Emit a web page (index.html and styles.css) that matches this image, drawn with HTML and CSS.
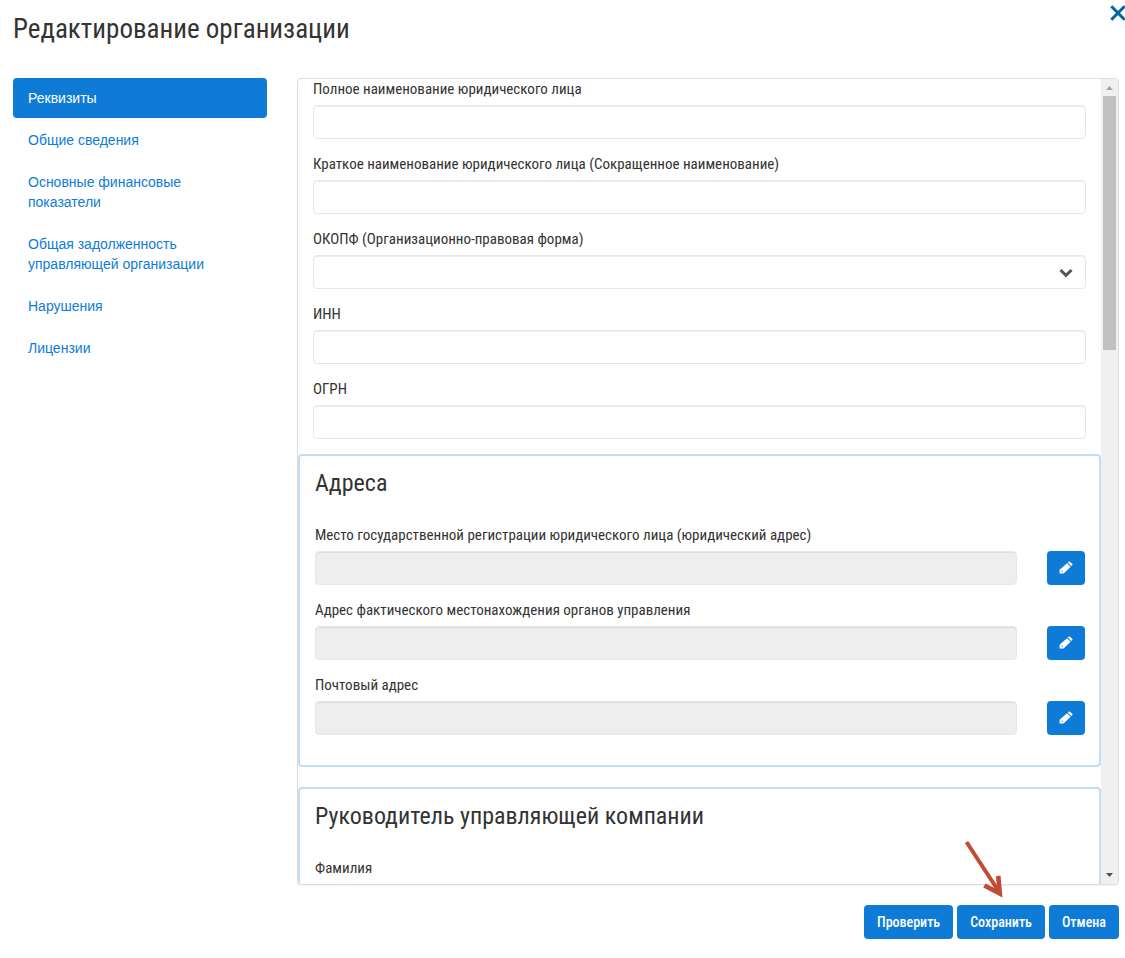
FILE: index.html
```html
<!DOCTYPE html>
<html lang="ru">
<head>
<meta charset="utf-8">
<title>Редактирование организации</title>
<meta name="viewport" content="width=device-width, initial-scale=1">
<link rel="stylesheet" href="styles.css">
</head>
<body>
<main class="dialog">
  <button class="close" type="button" aria-label="Закрыть">
    <svg viewBox="0 0 16 16" width="16" height="16" aria-hidden="true"><path d="M1.3 1.2 14.7 14.8M14.7 1.2 1.3 14.8"/></svg>
  </button>
  <h1 class="title">Редактирование организации</h1>

  <div class="columns">
    <nav class="tabs" aria-label="Разделы">
      <a class="tab tab-active" href="#details" aria-current="page">Реквизиты</a>
      <a class="tab" href="#general">Общие сведения</a>
      <a class="tab" href="#finance">Основные финансовые показатели</a>
      <a class="tab" href="#debt">Общая задолженность управляющей организации</a>
      <a class="tab" href="#violations">Нарушения</a>
      <a class="tab" href="#licenses">Лицензии</a>
    </nav>

    <div class="panel">
      <form class="form" id="details">
        <div class="fields">
          <div class="field">
            <label for="full-name">Полное наименование юридического лица</label>
            <input class="control" id="full-name" type="text">
          </div>
          <div class="field">
            <label for="short-name">Краткое наименование юридического лица (Сокращенное наименование)</label>
            <input class="control" id="short-name" type="text">
          </div>
          <div class="field">
            <label for="okopf">ОКОПФ (Организационно-правовая форма)</label>
            <div class="select">
              <select class="control" id="okopf"><option value=""></option></select>
              <svg class="chevron" viewBox="0 0 14 10" width="14" height="10" aria-hidden="true"><path d="M1.500 2 7 7.300 12.500 2"/></svg>
            </div>
          </div>
          <div class="field">
            <label for="inn">ИНН</label>
            <input class="control" id="inn" type="text">
          </div>
          <div class="field">
            <label for="ogrn">ОГРН</label>
            <input class="control" id="ogrn" type="text">
          </div>
        </div>

        <section class="group">
          <h2 class="group-title">Адреса</h2>
          <div class="field">
            <label for="legal">Место государственной регистрации юридического лица (юридический адрес)</label>
            <div class="row">
              <input class="control" id="legal" type="text" disabled>
              <button class="btn btn-icon" type="button" aria-label="Изменить юридический адрес"><svg viewBox="0 0 14 14" width="14" height="14" aria-hidden="true"><use href="#pencil"/></svg></button>
            </div>
          </div>
          <div class="field">
            <label for="actual">Адрес фактического местонахождения органов управления</label>
            <div class="row">
              <input class="control" id="actual" type="text" disabled>
              <button class="btn btn-icon" type="button" aria-label="Изменить фактический адрес"><svg viewBox="0 0 14 14" width="14" height="14" aria-hidden="true"><use href="#pencil"/></svg></button>
            </div>
          </div>
          <div class="field">
            <label for="postal">Почтовый адрес</label>
            <div class="row">
              <input class="control" id="postal" type="text" disabled>
              <button class="btn btn-icon" type="button" aria-label="Изменить почтовый адрес"><svg viewBox="0 0 14 14" width="14" height="14" aria-hidden="true"><use href="#pencil"/></svg></button>
            </div>
          </div>
        </section>

        <section class="group">
          <h2 class="group-title">Руководитель управляющей компании</h2>
          <div class="field">
            <label for="surname">Фамилия</label>
            <input class="control" id="surname" type="text">
          </div>
        </section>
      </form>
      <div class="scrollbar" aria-hidden="true">
        <svg class="scroll-arrow scroll-up" viewBox="0 0 17 17"><path d="M5 11h7L8.500 7z"/></svg>
        <div class="scroll-track"><div class="scroll-thumb"></div></div>
        <svg class="scroll-arrow scroll-down" viewBox="0 0 17 17"><path d="M5 6h7L8.500 10z"/></svg>
      </div>
    </div>
  </div>

  <footer class="actions">
    <button class="btn" type="button">Проверить</button>
    <div class="save">
      <button class="btn" type="submit" form="details">Сохранить</button>
      <svg class="pointer" viewBox="0 0 40 58" width="40" height="58" aria-hidden="true"><path class="shaft" d="M2.500 2 34.500 51"/><path class="tip" d="M21.500 43.500 19.200 47.500 38.500 57.500 36.500 35.500 32 36.200 32.800 46.500 30.500 48z"/></svg>
    </div>
    <button class="btn" type="button">Отмена</button>
  </footer>
</main>

<svg class="symbols" aria-hidden="true">
  <symbol id="pencil" viewBox="0 0 14 14">
    <path fill-rule="evenodd" d="M.6 12.600V8.800L8 2.200 11.700 5.700 4.600 12.600zM2.300 10 3.200 11 4 10.300 3 9.400z"/>
    <path d="M8.700 1.600 9.600.8Q10.500.2 11.300.9L13.200 2.700Q13.900 3.500 13.200 4.200L12.300 5.100z"/>
  </symbol>
</svg>
</body>
</html>
```

FILE: styles.css
```css
*,
*::before,
*::after {
  box-sizing: border-box;
}

body {
  margin: 0;
  background: #fff;
  color: #333;
  font: 14px/20px "Roboto Condensed", "Liberation Sans Narrow", Roboto, sans-serif;
}

.dialog {
  position: relative;
  display: flex;
  flex-direction: column;
  height: 100vh;
  padding: 14px 6px 19px 13px;
  overflow: hidden;
}

.close {
  position: absolute;
  top: 5px;
  right: -1px;
  display: flex;
  padding: 0;
  border: 0;
  background: none;
  cursor: pointer;
}

.close path {
  fill: none;
  stroke: #0463a5;
  stroke-width: 3;
}

.title {
  margin: 0 0 34px;
  font-size: 27px;
  font-weight: 400;
  line-height: 30px;
}

.columns {
  display: flex;
  flex: 1;
  gap: 30px;
  min-height: 0;
}

.tabs {
  display: flex;
  flex: 0 0 254px;
  flex-direction: column;
  gap: 2px;
  font-family: "Liberation Sans", Arial, sans-serif;
}

.tab {
  padding: 10px 15px;
  border-radius: 4px;
  color: #0e7cd7;
  text-decoration: none;
}

.tab-active {
  background: #0e7cd7;
  color: #fff;
}

.panel {
  display: flex;
  flex: 1;
  min-width: 0;
  border: 1px solid #ddd;
  border-radius: 4px;
  box-shadow: 0 1px 1px rgba(0, 0, 0, 0.05);
  overflow: hidden;
}

.form {
  flex: 1;
  min-width: 0;
  overflow-y: auto;
  scrollbar-width: none;
}

.fields {
  padding: 0 15px;
}

.field {
  margin-bottom: 15px;
}

.field label {
  display: block;
  margin-bottom: 6px;
  font-size: 15px;
}

.control {
  display: block;
  width: 100%;
  height: 34px;
  padding: 6px 12px;
  border: 1px solid #e5e8ea;
  border-radius: 4px;
  background: #fff;
  box-shadow: inset 0 1px 1px rgba(0, 0, 0, 0.075);
  color: inherit;
  font: inherit;
}

.control:disabled {
  background: #eee;
}

.select {
  position: relative;
}

.select .control {
  appearance: none;
}

.chevron {
  position: absolute;
  top: 13px;
  right: 13px;
  pointer-events: none;
}

.chevron path {
  fill: none;
  stroke: #555;
  stroke-width: 3;
}

.group {
  margin-bottom: 20px;
  padding: 14px 14px 15px 15px;
  border: 2px solid #bfdff8;
  border-radius: 4px;
}

.group-title {
  margin: 0 0 29px;
  font-size: 24px;
  font-weight: 400;
  line-height: 26px;
}

.row {
  display: flex;
  gap: 30px;
}

.row .control {
  flex: 1;
  min-width: 0;
}

.btn {
  height: 34px;
  padding: 0 13px;
  border: 0;
  border-radius: 4px;
  background: #0e7cd7;
  color: #fff;
  font: 500 14px/20px "Roboto Condensed", "Liberation Sans Narrow", Roboto, sans-serif;
  cursor: pointer;
}

.btn-icon {
  display: flex;
  flex: 0 0 38px;
  align-items: center;
  justify-content: center;
  padding: 0;
}

.btn-icon svg {
  fill: #fff;
}

.scrollbar {
  display: flex;
  flex: 0 0 17px;
  flex-direction: column;
  background: #f0f0f0;
}

.scroll-arrow {
  flex: 0 0 17px;
  width: 17px;
}

.scroll-up {
  fill: #a3a3a3;
}

.scroll-down {
  fill: #505050;
}

.scroll-track {
  flex: 1;
  padding: 0 2px;
}

.scroll-thumb {
  height: 33%;
  background: #c1c1c1;
}

.actions {
  display: flex;
  justify-content: flex-end;
  gap: 4px;
  padding-top: 20px;
}

.save {
  position: relative;
}

.pointer {
  position: absolute;
  bottom: 41px;
  left: 7px;
  pointer-events: none;
}

.shaft {
  fill: none;
  stroke: #c14c33;
  stroke-width: 4;
}

.tip {
  fill: #c14c33;
}

.symbols {
  display: none;
}
```
